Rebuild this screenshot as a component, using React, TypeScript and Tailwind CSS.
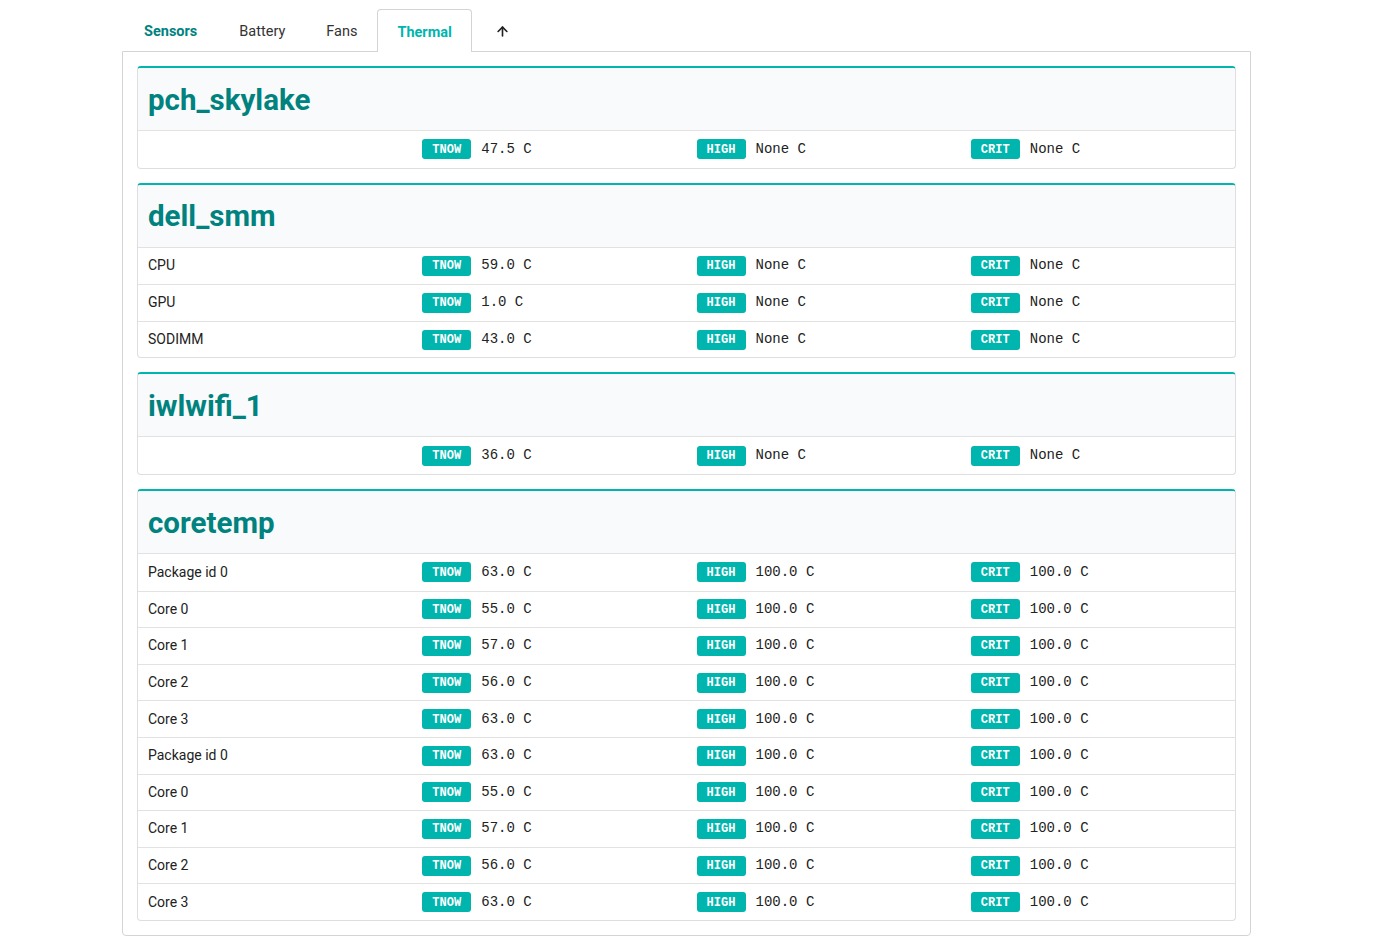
import React from "react";
import { ArrowUp } from "lucide-react";

type Row = { name: string; now: string; high: string; crit: string };
type Card = { title: string; rows: Row[] };

const core = (): Row[] => [
  { name: "Package id 0", now: "63.0", high: "100.0", crit: "100.0" },
  { name: "Core 0", now: "55.0", high: "100.0", crit: "100.0" },
  { name: "Core 1", now: "57.0", high: "100.0", crit: "100.0" },
  { name: "Core 2", now: "56.0", high: "100.0", crit: "100.0" },
  { name: "Core 3", now: "63.0", high: "100.0", crit: "100.0" },
];

const cards: Card[] = [
  { title: "pch_skylake", rows: [{ name: "", now: "47.5", high: "None", crit: "None" }] },
  {
    title: "dell_smm",
    rows: [
      { name: "CPU", now: "59.0", high: "None", crit: "None" },
      { name: "GPU", now: "1.0", high: "None", crit: "None" },
      { name: "SODIMM", now: "43.0", high: "None", crit: "None" },
    ],
  },
  { title: "iwlwifi_1", rows: [{ name: "", now: "36.0", high: "None", crit: "None" }] },
  { title: "coretemp", rows: [...core(), ...core()] },
];

const sans = { fontFamily: 'Roboto, "Noto Sans", sans-serif' };
const mono = { fontFamily: '"Liberation Mono", "DejaVu Sans Mono", monospace' };

function Badge({ label }: { label: string }) {
  return (
    <span
      className="inline-flex items-center justify-center h-[20px] w-[49px] rounded-[3px] bg-[#00b5ad] text-white text-[12px] font-bold pt-[1px]"
      style={mono}
    >
      {label}
    </span>
  );
}

function Val({ label, v }: { label: string; v: string }) {
  return (
    <div className="flex items-center gap-[10px] px-[10px]">
      <Badge label={label} />
      <span className="text-[14px] text-[#222]" style={mono}>
        {v} C
      </span>
    </div>
  );
}

export default function App() {
  return (
    <div className="bg-white min-h-[947px] pt-[9px]" style={sans}>
      <div className="ml-[122px] w-[1129px]">
        <div className="flex items-end h-[42px] pl-[1px] text-[14.5px]">
          <div className="px-[21px] h-[42px] pt-[4px] flex items-center font-bold text-[#00827f]">Sensors</div>
          <div className="px-[21px] h-[42px] pt-[4px] flex items-center text-[#333]">Battery</div>
          <div className="px-[20px] h-[42px] pt-[4px] flex items-center text-[#333]">Fans</div>
          <div className="px-[19px] h-[43px] -mb-[1px] pt-[4px] flex items-center font-bold text-[#00b5ad] bg-white border border-b-0 border-[#d4d4d5] rounded-t-[4px] relative z-10">
            Thermal
          </div>
          <div className="px-[23px] h-[42px] pt-[2px] flex items-center text-[#222]">
            <ArrowUp size={15} strokeWidth={2.6} />
          </div>
        </div>
        <div className="border border-[#d4d4d5] rounded-b-[4px] px-[14px] pt-[14px] pb-[14px] flex flex-col gap-[14px]">
          {cards.map((c) => (
            <div key={c.title} className="border border-[#dedede] border-t-2 border-t-[#00b5ad] rounded-[4px] overflow-hidden">
              <div className="h-[63px] bg-[#f9fafb] flex items-center px-[10px] border-b border-[#e2e2e2]">
                <h2 className="text-[29.5px] font-bold text-[#00827f] leading-none pt-[3px]">{c.title}</h2>
              </div>
              {c.rows.map((r, i) => (
                <div
                  key={i}
                  className={`grid grid-cols-4 items-center h-[36.6px] ${i > 0 ? "border-t border-[#e2e2e2]" : ""}`}
                >
                  <div className="px-[10px] text-[14px] text-[#222]">{r.name}</div>
                  <Val label="TNOW" v={r.now} />
                  <Val label="HIGH" v={r.high} />
                  <Val label="CRIT" v={r.crit} />
                </div>
              ))}
            </div>
          ))}
        </div>
      </div>
    </div>
  );
}
